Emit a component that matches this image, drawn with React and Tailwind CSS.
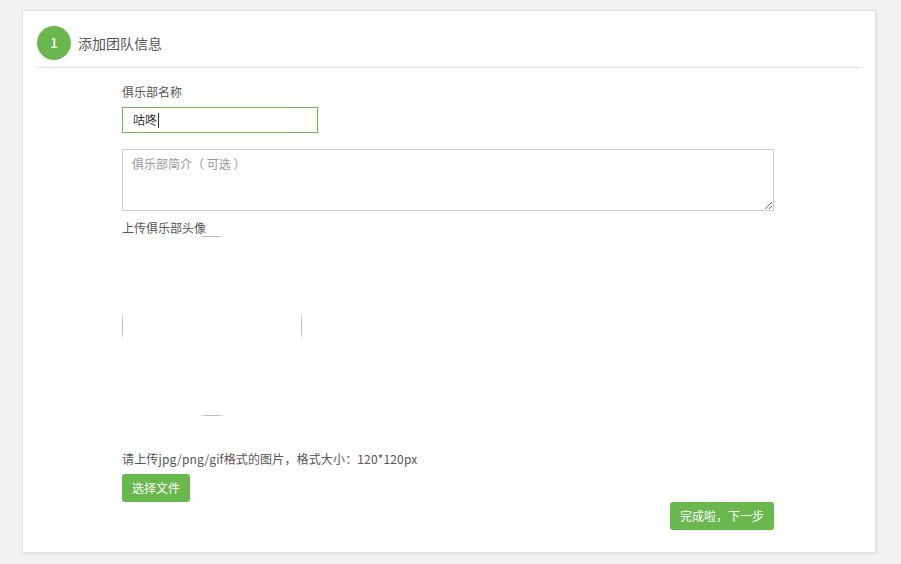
export default function App() {
  const font = { fontFamily: '"Noto Sans CJK SC", "Noto Sans", "Liberation Sans", sans-serif' };

  return (
    <div className="min-h-[564px] w-[901px] bg-[#f2f2f2] pt-[10px] pl-[22px]" style={font}>
      <div className="w-[854px] h-[543px] bg-white border border-[#e2e2dc] shadow-[1px_1px_3px_rgba(0,0,0,0.08)] px-[14px] pt-[15px]">
        {/* 步骤标题 */}
        <div className="flex items-center h-[34px]">
          <div className="w-[34px] h-[34px] rounded-full bg-[#6ab74e] text-white text-[13px] font-medium flex items-center justify-center">
            1
          </div>
          <span className="ml-[7px] text-[14px] text-[#555]">添加团队信息</span>
        </div>
        <div className="mt-[7px] h-px bg-[#dddddd] w-[823px]" />

        {/* 表单 */}
        <div className="pl-[85px] flex flex-col">
          <label className="mt-[15px] text-[12px] leading-[18px] text-[#555]">俱乐部名称</label>
          <div className="mt-[6px] w-[196px] h-[26px] border border-[#6ab74e] flex items-center pl-[10px] text-[12px] text-[#333]">
            咕咚<span className="w-px h-[15px] bg-[#333] ml-px" />
          </div>
          <textarea
            className="mt-[16px] w-[652px] h-[62px] border border-[#cccccc] px-[9px] py-[5px] text-[12px] leading-[18px] text-[#333] placeholder:text-[#999] outline-none"
            placeholder="俱乐部简介（ 可选 ）"
          />
          <div className="mt-[8px] text-[12px] leading-[18px] text-[#555]">上传俱乐部头像</div>
          {/* 头像圆框，只在四个切点处隐约可见 */}
          <svg width="182" height="182" viewBox="0 0 182 182" className="-mt-[2px] -ml-px block">
            <defs>
              <linearGradient id="h" x1="0" x2="1" y1="0" y2="0">
                <stop offset="0" stopColor="#ffffff" />
                <stop offset="0.3" stopColor="#bdbdbd" />
                <stop offset="0.7" stopColor="#bdbdbd" />
                <stop offset="1" stopColor="#ffffff" />
              </linearGradient>
              <linearGradient id="v" x1="0" x2="0" y1="0" y2="1">
                <stop offset="0" stopColor="#ffffff" />
                <stop offset="0.3" stopColor="#bdbdbd" />
                <stop offset="0.7" stopColor="#bdbdbd" />
                <stop offset="1" stopColor="#ffffff" />
              </linearGradient>
            </defs>
            <rect x="77" y="1" width="28" height="1" fill="url(#h)" />
            <rect x="77" y="180" width="28" height="1" fill="url(#h)" />
            <rect x="1" y="77" width="1" height="28" fill="url(#v)" />
            <rect x="180" y="77" width="1" height="28" fill="url(#v)" />
          </svg>
          <div className="mt-[33px] text-[12px] leading-[18px] text-[#555] tracking-[0.15px]">
            请上传jpg/png/gif格式的图片，格式大小：120*120px
          </div>
          <button className="mt-[6px] w-[68px] h-[28px] rounded-[3px] bg-[#6ab74e] text-white text-[12px]">
            选择文件
          </button>
          <div className="w-[652px] flex justify-end">
            <button className="w-[104px] h-[28px] rounded-[3px] bg-[#6ab74e] text-white text-[12px]">
              完成啦，下一步
            </button>
          </div>
        </div>
      </div>
    </div>
  );
}
